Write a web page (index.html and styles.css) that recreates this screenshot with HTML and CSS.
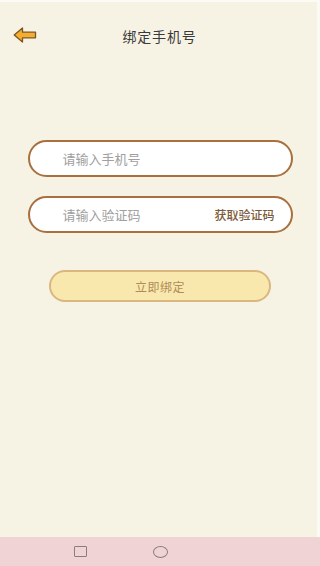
FILE: index.html
```html
<!DOCTYPE html>
<html lang="zh">
<head>
<meta charset="utf-8">
<link rel="stylesheet" href="styles.css">
</head>
<body>
<div class="screen">
  <div class="header">
    <svg class="back" width="24" height="16" viewBox="0 0 24 16">
      <path d="M1.2 8 L9.5 1 L9.5 5.2 L22.5 5.2 L22.5 10.8 L9.5 10.8 L9.5 15 Z" fill="#f6ac2c" stroke="#7a5424" stroke-width="1.3" stroke-linejoin="round"/>
    </svg>
    <div class="title">绑定手机号</div>
  </div>
  <div class="form">
    <div class="field"><span class="ph">请输入手机号</span></div>
    <div class="field"><span class="ph">请输入验证码</span><span class="code">获取验证码</span></div>
    <div class="btn">立即绑定</div>
  </div>
</div>
<div class="navbar">
  <span class="sq"></span>
  <span class="ci"></span>
</div>
</body>
</html>
```

FILE: styles.css
```css
* { box-sizing: border-box; }
html, body { margin: 0; padding: 0; }
body {
  width: 320px;
  height: 566px;
  overflow: hidden;
  font-family: "Noto Sans CJK SC", "Noto Sans", sans-serif;
  background: #f8f4e6;
  display: flex;
  flex-direction: column;
}
.screen {
  flex: 1;
  background: #f7f3e4;
  border-top: 2px solid #fbfaf4;
  border-right: 3px solid #fbfaf4;
  display: flex;
  flex-direction: column;
}
.header {
  height: 68px;
  display: flex;
  align-items: center;
  justify-content: center;
  position: relative;
}
.back {
  position: absolute;
  left: 13px;
  top: 25px;
}
.title {
  font-size: 14px;
  color: #3a3a3a;
  margin-top: -1px;
  margin-left: 2px;
  letter-spacing: 0.8px;
}
.form {
  display: flex;
  flex-direction: column;
  align-items: center;
  padding-top: 70px;
  padding-left: 3px;
}
.field {
  width: 265px;
  height: 37px;
  border: 2px solid #a8703f;
  border-radius: 19px;
  background: #ffffff;
  display: flex;
  align-items: center;
  justify-content: space-between;
  padding: 0 16px 0 33px;
  margin-bottom: 19px;
}
.ph {
  font-size: 13px;
  color: #a0a0a0;
}
.code {
  font-size: 12px;
  color: #7b5a3a;
  font-weight: 500;
}
.btn {
  width: 222px;
  height: 32px;
  margin-top: 18px;
  border: 2px solid #d9b77f;
  border-radius: 16px;
  background: #f9e8ae;
  display: flex;
  align-items: center;
  justify-content: center;
  font-size: 12px;
  color: #b08b5a;
  letter-spacing: 0.5px;
  margin-left: 0;
}
.navbar {
  height: 29px;
  background: #f0d3d5;
  display: flex;
  align-items: center;
  padding-left: 74px;
}
.sq {
  width: 13px;
  height: 11px;
  border: 1.5px solid #8c7c7e;
  border-radius: 1px;
}
.ci {
  width: 15px;
  height: 12px;
  border: 1.5px solid #8c7c7e;
  border-radius: 50%;
  margin-left: 66px;
}
```
